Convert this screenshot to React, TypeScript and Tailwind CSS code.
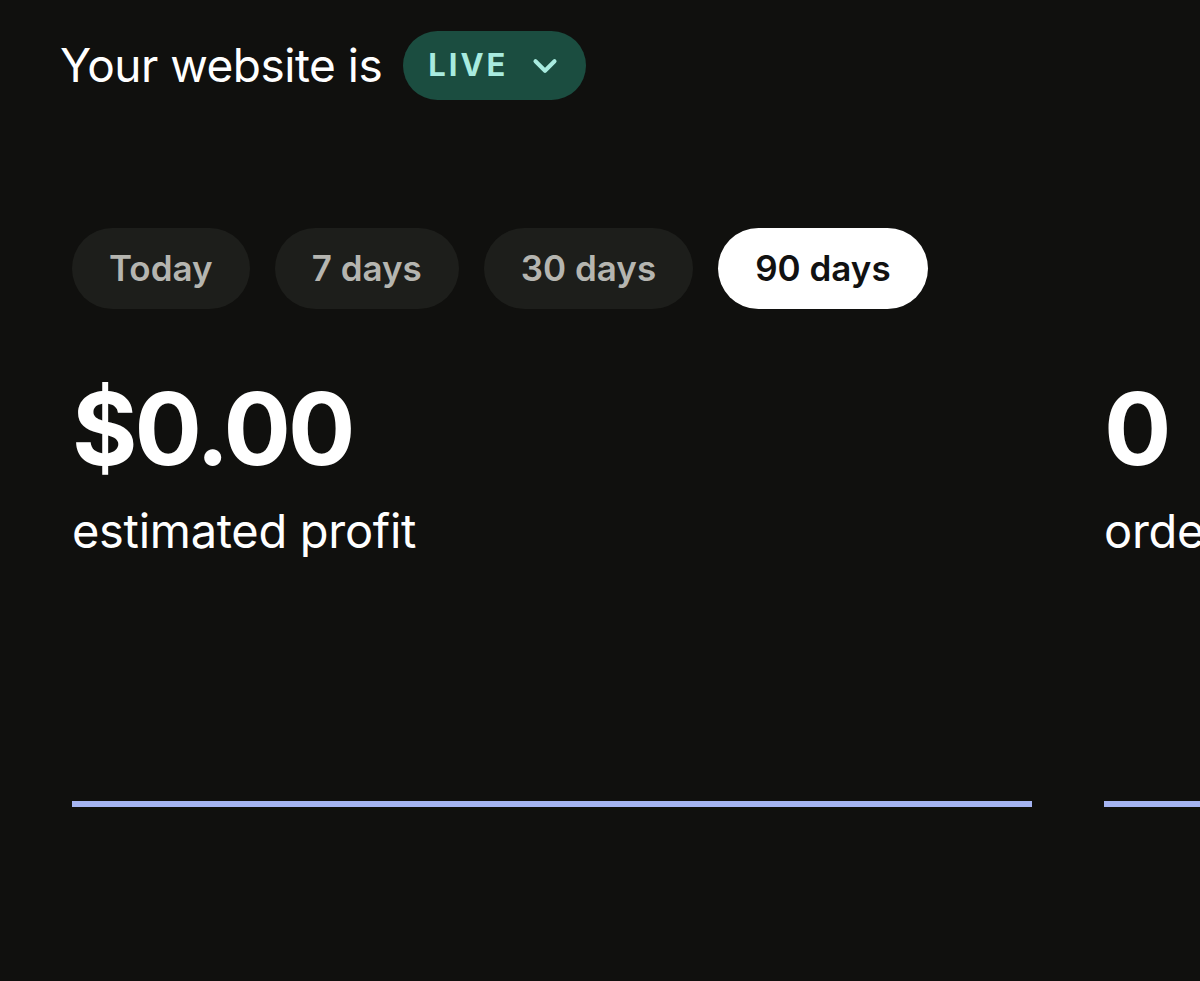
import { ChevronDown } from "lucide-react";

const ranges = ["Today", "7 days", "30 days", "90 days"];

function Stat({ value, label }: { value: string; label: string }) {
  return (
    <div className="w-[960px] shrink-0 flex flex-col">
      <div className="text-[100px] leading-none font-bold tracking-[-3px] text-white">{value}</div>
      <div className="mt-[28px] text-[47px] leading-none text-white tracking-[-0.3px]">{label}</div>
      <div className="mt-[247px] h-[6px] bg-[#a5b4f2]" />
    </div>
  );
}

export default function App() {
  const active = "90 days";

  return (
    <div className="w-[1200px] h-[981px] overflow-hidden bg-[#10100e] font-['Inter',sans-serif]">
      {/* header */}
      <div className="flex items-center gap-[21px] pl-[60px] pt-[31px]">
        <span className="text-[46px] text-white tracking-[-0.5px]">Your website is</span>
        <button className="flex items-center gap-[18px] h-[69px] pl-[25px] pr-[22px] rounded-full bg-[#1b4d40]">
          <span className="text-[31px] font-bold tracking-[3px] text-[#a8ebdf]">LIVE</span>
          <ChevronDown className="w-[38px] h-[38px] text-[#a8ebdf]" strokeWidth={2.6} />
        </button>
      </div>

      {/* range tabs */}
      <div className="flex gap-[25px] pl-[72px] mt-[128px]">
        {ranges.map((r) => (
          <button
            key={r}
            className={
              r === active
                ? "h-[81px] px-[37px] rounded-full bg-white text-[#111] text-[35px] font-semibold"
                : "h-[81px] px-[37px] rounded-full bg-[#1d1e1b] text-[#b5b5b0] text-[35px] font-semibold"
            }
          >
            {r}
          </button>
        ))}
      </div>

      {/* stats */}
      <div className="flex gap-[72px] pl-[72px] mt-[70px]">
        <Stat value="$0.00" label="estimated profit" />
        <Stat value="0" label="orders" />
      </div>
    </div>
  );
}
